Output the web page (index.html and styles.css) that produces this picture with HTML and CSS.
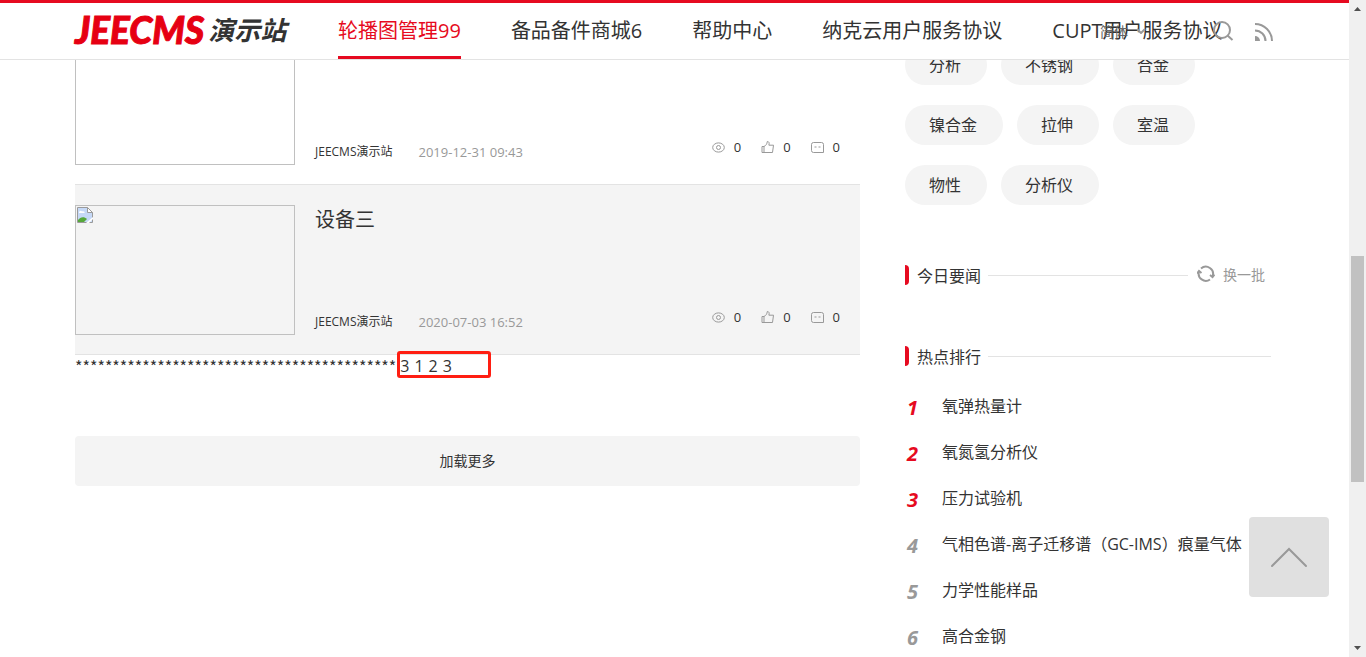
FILE: index.html
```html
<!DOCTYPE html>
<html lang="zh-CN">
<head>
    <meta charset="UTF-8">
    <meta name="viewport" content="width=device-width, initial-scale=1">
    <title>JEECMS演示站</title>
    <link rel="stylesheet" href="styles.css">
</head>
<body>
    <svg width="0" height="0" class="sprite">
        <symbol id="eye" viewBox="0 0 14 14">
            <ellipse cx="6.500" cy="7.500" rx="5.800" ry="4.600"/>
            <circle cx="6.500" cy="7.500" r="2"/>
        </symbol>
        <symbol id="like" viewBox="0 0 14 14">
            <path d="M1 6.500h2v6h-2zM3 6.500c2-1 3-2.500 3.300-5 1.700 0 2.200 1.300 1.600 3.700h4.600l-1 7.300h-8.500"/>
        </symbol>
        <symbol id="comment" viewBox="0 0 14 14">
            <path d="M2.500 2.500h8a2 2 0 0 1 2 2v8h-10a2 2 0 0 1-2-2v-6a2 2 0 0 1 2-2z"/>
            <path d="M3.500 7h2M7.500 7h2"/>
        </symbol>
        <symbol id="broken" viewBox="0 0 16 16">
            <path d="M.5.500h10l5 5v10H.5z" fill="#c6d9f7" stroke="#9a9a9a"/>
            <path d="M10.500.500v5h5z" fill="#fff" stroke="#9a9a9a"/>
            <path d="M2 6c0-2 2-3 3-1.500C7 4 8 5 7.500 6z" fill="#fff"/>
            <path d="M1 15v-2c2-3 6-4 9-1l-3 3z" fill="#56a83a"/>
            <path d="M9 16l7-6v2l-4 4z" fill="#fff"/>
        </symbol>
    </svg>

    <div class="page">
        <header class="header">
            <div class="container header-inner">
                <a href="#" class="logo"><span class="logo-en">JEECMS</span><span class="logo-cn">演示站</span></a>
                <nav class="nav">
                    <a href="#" class="active">轮播图管理99</a>
                    <a href="#">备品备件商城6</a>
                    <a href="#">帮助中心</a>
                    <a href="#">纳克云用户服务协议</a>
                    <a href="#">CUPT用户服务协议</a>
                </nav>
                <div class="tools">
                    <button class="lang">简体
                        <svg width="10" height="6" viewBox="0 0 10 6"><path d="M1 1l4 4 4-4"/></svg>
                    </button>
                    <button aria-label="搜索">
                        <svg width="22" height="22" viewBox="0 0 22 22"><circle cx="10" cy="10" r="8"/><path d="M15.500 15.500l5 4.500"/></svg>
                    </button>
                    <a href="#" aria-label="RSS">
                        <svg width="20" height="20" viewBox="0 0 20 20"><path d="M1 3a17 17 0 0 1 17 17M1 9.500a10.500 10.500 0 0 1 10.500 10.500"/><path d="M1 15a5 5 0 0 1 5 5H1z" class="solid"/></svg>
                    </a>
                </div>
            </div>
        </header>

        <div class="container content">
            <main class="main">
                <article class="item">
                    <div class="thumb"><svg width="16" height="16"><use href="#broken"/></svg></div>
                    <div class="info">
                        <h3><a href="#">设备二</a></h3>
                        <div class="meta">
                            <span class="source">JEECMS演示站</span>
                            <time>2019-12-31 09:43</time>
                            <ul class="stats">
                                <li><svg width="14" height="14"><use href="#eye"/></svg>0</li>
                                <li><svg width="14" height="14"><use href="#like"/></svg>0</li>
                                <li><svg width="14" height="14"><use href="#comment"/></svg>0</li>
                            </ul>
                        </div>
                    </div>
                </article>
                <article class="item hover">
                    <div class="thumb"><svg width="16" height="16"><use href="#broken"/></svg></div>
                    <div class="info">
                        <h3><a href="#">设备三</a></h3>
                        <div class="meta">
                            <span class="source">JEECMS演示站</span>
                            <time>2020-07-03 16:52</time>
                            <ul class="stats">
                                <li><svg width="14" height="14"><use href="#eye"/></svg>0</li>
                                <li><svg width="14" height="14"><use href="#like"/></svg>0</li>
                                <li><svg width="14" height="14"><use href="#comment"/></svg>0</li>
                            </ul>
                        </div>
                    </div>
                </article>
                <div class="debug">
                    <span class="stars">*******************************************</span>
                    <div class="mark"><span>3</span><span>1</span><span>2</span><span>3</span></div>
                </div>
                <button class="more">加载更多</button>
            </main>

            <aside class="side">
                <div class="tags">
                    <a href="#">分析</a>
                    <a href="#">不锈钢</a>
                    <a href="#">合金</a>
                    <a href="#">镍合金</a>
                    <a href="#">拉伸</a>
                    <a href="#">室温</a>
                    <a href="#">物性</a>
                    <a href="#">分析仪</a>
                </div>

                <div class="title news">
                    <h2>今日要闻</h2>
                    <button class="refresh">
                        <svg width="18" height="18" viewBox="0 0 18 18"><path d="M4 3.500A7.200 7.200 0 0 1 15.500 11.500M13 14.500A7.200 7.200 0 0 1 2 6.500"/><path d="M17.500 9.500l-2 2.500-2.500-2M0 8.500l2-2.500 2.500 2"/></svg>
                        换一批
                    </button>
                </div>

                <div class="title">
                    <h2>热点排行</h2>
                </div>
                <ol class="rank">
                    <li><i>1</i><a href="#">氧弹热量计</a></li>
                    <li><i>2</i><a href="#">氧氮氢分析仪</a></li>
                    <li><i>3</i><a href="#">压力试验机</a></li>
                    <li><i>4</i><a href="#">气相色谱-离子迁移谱（GC-IMS）痕量气体</a></li>
                    <li><i>5</i><a href="#">力学性能样品</a></li>
                    <li><i>6</i><a href="#">高合金钢</a></li>
                </ol>
            </aside>
        </div>

        <button class="back-top" aria-label="返回顶部">
            <svg width="38" height="22" viewBox="0 0 38 22"><path d="M2 20L19 3l17 17"/></svg>
        </button>
    </div>

    <div class="scrollbar">
        <svg width="17" height="17" viewBox="0 0 17 17"><path d="M5 11l3.500-4 3.500 4z"/></svg>
        <div class="track"><div class="handle"></div></div>
        <svg width="17" height="17" viewBox="0 0 17 17"><path d="M5 6l3.500 4L12 6z"/></svg>
    </div>
</body>
</html>
```
FILE: styles.css
```css
*,
*::before,
*::after {
    box-sizing: border-box;
}

body {
    margin: 0;
    display: flex;
    height: 100vh;
    overflow: hidden;
    font-family: "Open Sans", "Noto Sans CJK SC", sans-serif;
    font-size: 16px;
    color: #333;
    background: #fff;
}

a {
    color: inherit;
    text-decoration: none;
}

button {
    padding: 0;
    border: none;
    background: none;
    font: inherit;
    color: inherit;
    cursor: pointer;
}

h2, h3, ul, ol {
    margin: 0;
    padding: 0;
    font-weight: normal;
    list-style: none;
}

svg {
    display: block;
    flex: none;
    fill: none;
    stroke: #999;
}

.sprite {
    position: absolute;
}

.page {
    position: relative;
    flex: 1;
    min-width: 0;
    overflow: hidden;
}

.container {
    max-width: 1199px;
    margin: 0 auto;
}

/* header */
.header {
    position: absolute;
    top: 0;
    left: 0;
    right: 0;
    z-index: 10;
    height: 60px;
    border-top: 3px solid #e60a20;
    border-bottom: 1px solid #e3e3e3;
    background: #fff;
}

.header-inner {
    position: relative;
    display: flex;
    height: 56px;
}

.logo {
    display: flex;
    align-items: center;
    gap: 4px;
    width: 263px;
    padding-bottom: 2px;
    flex: none;
    font-style: italic;
    line-height: 54px;
    white-space: nowrap;
}

.logo-en {
    font-family: Lato, "Open Sans", sans-serif;
    font-size: 37px;
    font-weight: 900;
    color: #e60012;
    -webkit-text-stroke: 1px #e60012;
}

.logo-cn {
    font-size: 26px;
    font-weight: bold;
}

.nav {
    display: flex;
    gap: 50px;
    font-size: 20px;
    line-height: 56px;
    white-space: nowrap;
}

.nav .active {
    color: #e60a20;
    box-shadow: inset 0 -3px #e60a20;
}

.tools {
    position: absolute;
    top: 0;
    right: 0;
    display: flex;
    align-items: center;
    height: 56px;
    gap: 20px;
}

.tools svg {
    stroke-width: 2;
}

.tools .solid {
    fill: #999;
    stroke: none;
}

.lang {
    display: flex;
    align-items: center;
    gap: 8px;
    margin-right: 46px;
    font-size: 14px;
    color: #666;
}

/* list */
.content {
    display: flex;
    gap: 45px;
    padding-top: 15px;
}

.main {
    width: 785px;
}

.item {
    display: flex;
    align-items: flex-start;
    gap: 20px;
    height: 170px;
    padding: 20px 20px 0 0;
    border-bottom: 1px solid #e3e3e3;
}

.item.hover {
    background: #f4f4f4;
}

.thumb {
    width: 220px;
    height: 130px;
    padding: 1px;
    border: 1px solid #c0c0c0;
}

.thumb svg {
    stroke: none;
}

.info {
    flex: 1;
    display: flex;
    flex-direction: column;
    justify-content: space-between;
    height: 130px;
}

.info h3 {
    font-size: 20px;
    line-height: 30px;
}

.meta {
    display: flex;
    align-items: flex-end;
    font-size: 12px;
    line-height: 26px;
}

.meta time {
    margin-left: 26px;
    font-size: 13px;
    color: #999;
}

.stats {
    display: flex;
    gap: 20px;
    margin-left: auto;
    padding-bottom: 5px;
    font-size: 13px;
}

.stats li {
    display: flex;
    align-items: center;
    gap: 8px;
}

.debug {
    display: flex;
    gap: 4px;
    line-height: 22px;
    white-space: nowrap;
}

.stars {
    font-family: "Noto Sans CJK SC", sans-serif;
}

.mark {
    position: relative;
    display: flex;
    gap: 5px;
}

.mark::after {
    content: "";
    position: absolute;
    top: -4px;
    left: -3px;
    width: 94px;
    height: 27px;
    border: 3px solid #ff1e12;
    border-radius: 3px;
}

.more {
    display: block;
    width: 100%;
    height: 50px;
    margin-top: 59px;
    padding-bottom: 2px;
    border-radius: 4px;
    background: #f4f4f4;
    font-size: 14px;
}

/* sidebar */
.side {
    width: 366px;
    padding-top: 30px;
}

.tags {
    display: flex;
    flex-wrap: wrap;
    gap: 20px 14px;
    padding-right: 60px;
}

.tags a {
    padding: 0 26px 0 24px;
    border-radius: 20px;
    background: #f4f4f4;
    line-height: 40px;
}

.title {
    display: flex;
    align-items: center;
    height: 20px;
}

.title.news {
    margin: 60px 0 61px;
}

.title::before {
    content: "";
    width: 4px;
    height: 20px;
    border-radius: 0 4px 4px 0;
    background: #e60a20;
}

.title::after {
    content: "";
    flex: 1;
    height: 1px;
    background: #e3e3e3;
}

.title h2 {
    padding: 2px 7px 0 8px;
    font-size: 16px;
    line-height: 20px;
}

.refresh {
    order: 1;
    display: flex;
    align-items: center;
    gap: 8px;
    padding: 0 6px 2px 9px;
    font-size: 14px;
    color: #999;
}

.refresh svg {
    stroke-width: 2;
}

.rank {
    padding-top: 16px;
}

.rank li {
    display: flex;
    align-items: center;
    height: 46px;
    white-space: nowrap;
}

.rank i {
    width: 37px;
    padding: 4px 0 0 2px;
    font-size: 20px;
    font-weight: bold;
    color: #999;
}

.rank li:nth-child(-n+3) i {
    color: #e60a20;
}

.back-top {
    position: absolute;
    right: 20px;
    bottom: 60px;
    display: flex;
    align-items: center;
    justify-content: center;
    width: 80px;
    height: 80px;
    border-radius: 4px;
    background: #e0e0e0;
}

.back-top svg {
    stroke-width: 2;
    stroke-linecap: round;
}

/* scrollbar */
.scrollbar {
    display: flex;
    flex-direction: column;
    width: 17px;
    background: #f0f0f0;
}

.scrollbar svg {
    fill: #505050;
    stroke: none;
}

.track {
    flex: 1;
    display: flex;
    flex-direction: column;
    padding: 0 2px;
}

.track::before {
    content: "";
    flex: 239;
}

.track::after {
    content: "";
    flex: 158;
}

.handle {
    flex: 226;
    background: #c1c1c1;
}
```
